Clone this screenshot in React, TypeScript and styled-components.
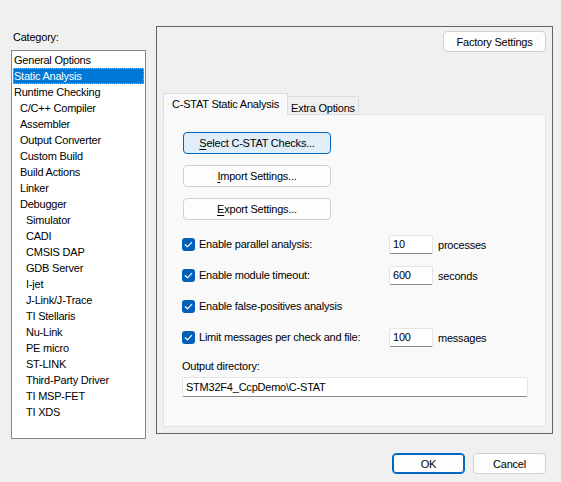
import React from "react";
import styled, { createGlobalStyle } from "styled-components";

const GlobalStyle = createGlobalStyle`
    html, body {
        margin: 0;
        padding: 0;
        background: #f0f0f0;
    }
    body {
        font-family: "Liberation Sans", Arial, sans-serif;
        font-size: 11px;
        letter-spacing: -0.22px;
        color: #000;
    }
`;

interface CategoryItem {
    label: string;
    level: number;
    selected?: boolean;
}

const categories: CategoryItem[] = [
    { label: "General Options", level: 0 },
    { label: "Static Analysis", level: 0, selected: true },
    { label: "Runtime Checking", level: 0 },
    { label: "C/C++ Compiler", level: 1 },
    { label: "Assembler", level: 1 },
    { label: "Output Converter", level: 1 },
    { label: "Custom Build", level: 1 },
    { label: "Build Actions", level: 1 },
    { label: "Linker", level: 1 },
    { label: "Debugger", level: 1 },
    { label: "Simulator", level: 2 },
    { label: "CADI", level: 2 },
    { label: "CMSIS DAP", level: 2 },
    { label: "GDB Server", level: 2 },
    { label: "I-jet", level: 2 },
    { label: "J-Link/J-Trace", level: 2 },
    { label: "TI Stellaris", level: 2 },
    { label: "Nu-Link", level: 2 },
    { label: "PE micro", level: 2 },
    { label: "ST-LINK", level: 2 },
    { label: "Third-Party Driver", level: 2 },
    { label: "TI MSP-FET", level: 2 },
    { label: "TI XDS", level: 2 },
];

interface OptionRow {
    label: string;
    value?: string;
    unit?: string;
}

const options: OptionRow[] = [
    { label: "Enable parallel analysis:", value: "10", unit: "processes" },
    { label: "Enable module timeout:", value: "600", unit: "seconds" },
    { label: "Enable false-positives analysis" },
    { label: "Limit messages per check and file:", value: "100", unit: "messages" },
];

function CheckIcon() {
    return (
        <svg width="13" height="13" viewBox="0 0 13 13">
            <rect x="0" y="0" width="13" height="13" rx="3" fill="#005fb8" />
            <path d="M3.3 6.7 L5.5 8.8 L9.7 4.4" fill="none" stroke="#fff" strokeWidth="1.2" strokeLinecap="round" strokeLinejoin="round" />
        </svg>
    );
}

export default function App() {
    return (
        <Dialog>
            <GlobalStyle />
            <Main>
                <Sidebar>
                    <CategoryLabel>Category:</CategoryLabel>
                    <CategoryList>
                        {categories.map((c) => (
                            <CategoryEntry key={c.label} $level={c.level} $selected={!!c.selected}>
                                {c.label}
                            </CategoryEntry>
                        ))}
                    </CategoryList>
                </Sidebar>

                <Panel>
                    <PanelHeader>
                        <Button $width={103}>Factory Settings</Button>
                    </PanelHeader>

                    <Tabs>
                        <TabStrip>
                            <Tab $active $width={125}>C-STAT Static Analysis</Tab>
                            <Tab $width={72}>Extra Options</Tab>
                        </TabStrip>
                        <TabContent>
                            <ButtonStack>
                                <Button $width={148} $focused>
                                    <u>S</u>elect C-STAT Checks...
                                </Button>
                                <Button $width={148}>
                                    <u>I</u>mport Settings...
                                </Button>
                                <Button $width={148}>
                                    <u>E</u>xport Settings...
                                </Button>
                            </ButtonStack>

                            <OptionList>
                                {options.map((o) => (
                                    <Option key={o.label}>
                                        <CheckLabel>
                                            <CheckIcon />
                                            <span>{o.label}</span>
                                        </CheckLabel>
                                        {o.value && <SmallInput>{o.value}</SmallInput>}
                                        {o.unit && <Unit>{o.unit}</Unit>}
                                    </Option>
                                ))}
                            </OptionList>

                            <OutputBlock>
                                <FieldLabel>Output directory:</FieldLabel>
                                <WideInput>STM32F4_CcpDemo\C-STAT</WideInput>
                            </OutputBlock>
                        </TabContent>
                    </Tabs>
                </Panel>
            </Main>

            <Footer>
                <Button $width={73} $height={21} $default>OK</Button>
                <Button $width={73} $height={21}>Cancel</Button>
            </Footer>
        </Dialog>
    );
}

const Dialog = styled.div`
    width: 561px;
    height: 482px;
    box-sizing: border-box;
    padding: 26px 9px 0 11px;
    display: flex;
    flex-direction: column;
    overflow: hidden;
`;

const Main = styled.div`
    display: grid;
    grid-template-columns: 135px 397px;
    gap: 10px;
    align-items: start;
`;

const Sidebar = styled.div`
    display: flex;
    flex-direction: column;
`;

const CategoryLabel = styled.div`
    height: 24px;
    box-sizing: border-box;
    padding: 5px 0 0 2px;
`;

const CategoryList = styled.div`
    height: 389px;
    box-sizing: border-box;
    background: #fff;
    border: 1px solid #828790;
    padding: 1px 1px;
    display: flex;
    flex-direction: column;
`;

const CategoryEntry = styled.div<{ $level: number; $selected: boolean }>`
    height: 16px;
    line-height: 16px;
    box-sizing: border-box;
    padding-left: ${(p) => 1 + p.$level * 6}px;
    white-space: nowrap;
    background: ${(p) => (p.$selected ? "#0078d7" : "transparent")};
    color: ${(p) => (p.$selected ? "#fff" : "#000")};
    outline: ${(p) => (p.$selected ? "1px dotted #f0a040" : "none")};
    outline-offset: -1px;
`;

const Panel = styled.div`
    height: 408px;
    box-sizing: border-box;
    border: 1px solid #646464;
    padding: 4px 6px 6px 6px;
    display: flex;
    flex-direction: column;
`;

const PanelHeader = styled.div`
    display: flex;
    justify-content: flex-end;
    margin-right: -2px;
    margin-left: -2px;
    height: 63px;

    & > div {
        margin-right: 2px;
    }
`;

const Button = styled.div<{ $width: number; $height?: number; $focused?: boolean; $default?: boolean }>`
    width: ${(p) => p.$width}px;
    height: ${(p) => p.$height ?? 21}px;
    box-sizing: border-box;
    display: flex;
    align-items: center;
    justify-content: center;
    border-radius: 4px;
    background: ${(p) => (p.$focused ? "#e0eef9" : "#fdfdfd")};
    border: 1px solid ${(p) => (p.$focused || p.$default ? "#0067c0" : "#d0d0d0")};
    box-shadow: ${(p) => (p.$default ? "inset 0 0 0 1px #0067c0" : "none")};
    white-space: nowrap;

    & > u {
        text-decoration-thickness: 1px;
        text-underline-offset: 2px;
    }
`;

const Tabs = styled.div`
    flex: 1;
    display: flex;
    flex-direction: column;
`;

const TabStrip = styled.div`
    display: flex;
    align-items: flex-end;
    height: 21px;
    position: relative;
    z-index: 1;
    margin-bottom: -1px;
`;

const Tab = styled.div<{ $active?: boolean; $width: number }>`
    width: ${(p) => p.$width}px;
    height: ${(p) => (p.$active ? 22 : 19)}px;
    box-sizing: border-box;
    padding-top: ${(p) => (p.$active ? 4 : 5)}px;
    text-align: center;
    border: 1px solid #dcdcdc;
    border-bottom: ${(p) => (p.$active ? "1px solid #f9f9f9" : "1px solid #dcdcdc")};
    background: ${(p) => (p.$active ? "#f9f9f9" : "#f0f0f0")};
    margin-right: ${(p) => (p.$active ? "-1px" : "0")};
    white-space: nowrap;
`;

const TabContent = styled.div`
    flex: 1;
    box-sizing: border-box;
    background: #f9f9f9;
    border: 1px solid #e3e3e3;
    padding: 17px 0 0 18px;
    display: flex;
    flex-direction: column;
`;

const ButtonStack = styled.div`
    display: flex;
    flex-direction: column;
    gap: 11px;
    padding-left: 1px;

    & > div {
        height: 22px;
    }
`;

const OptionList = styled.div`
    margin-top: 14px;
    display: flex;
    flex-direction: column;
    gap: 11px;
`;

const Option = styled.div`
    display: grid;
    grid-template-columns: 202px 44px auto;
    column-gap: 5px;
    align-items: center;
    height: 20px;
`;

const CheckLabel = styled.div`
    display: flex;
    align-items: center;
    gap: 4px;
    white-space: nowrap;

    & > svg {
        flex: none;
    }
`;

const SmallInput = styled.div`
    height: 19px;
    box-sizing: border-box;
    background: #fff;
    border: 1px solid #e5e5e5;
    border-bottom-color: #8a8a8a;
    border-radius: 2px;
    padding: 2px 0 0 3px;
`;

const Unit = styled.div`
    padding-top: 2px;
`;

const OutputBlock = styled.div`
    margin-top: 13px;
    display: flex;
    flex-direction: column;
    gap: 3px;
`;

const FieldLabel = styled.div`
    height: 14px;
`;

const WideInput = styled.div`
    width: 346px;
    height: 20px;
    box-sizing: border-box;
    background: #fff;
    border: 1px solid #e5e5e5;
    border-bottom-color: #8a8a8a;
    border-radius: 2px;
    padding: 3px 0 0 3px;
`;

const Footer = styled.div`
    display: flex;
    justify-content: flex-end;
    gap: 8px;
    padding: 14px 6px 0 0;
`;
